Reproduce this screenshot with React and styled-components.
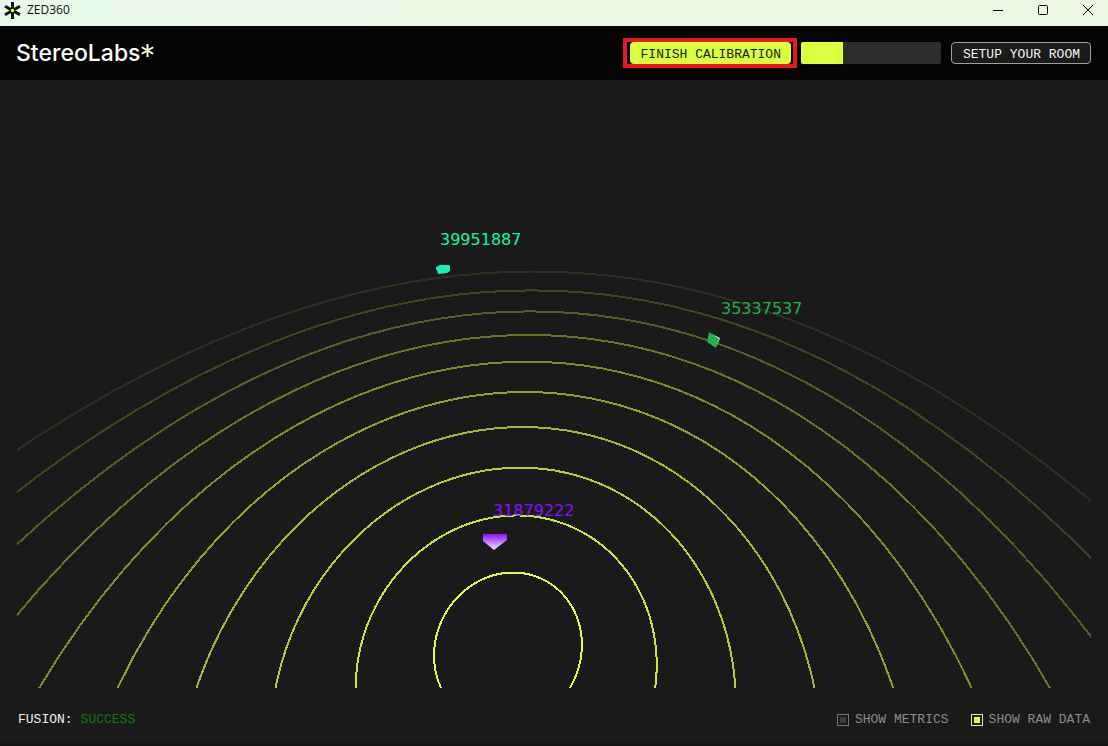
import React from "react";
import styled, { createGlobalStyle } from "styled-components";

const GlobalStyle = createGlobalStyle`
  * { box-sizing: border-box; }
  body { margin: 0; background: #1a1a1a; }
`;

const LIME = "#daff3e";

const Window = styled.div`
  min-height: 100vh;
  display: flex;
  flex-direction: column;
  background: #1a1a1a;
  font-family: "Liberation Mono", monospace;
  font-size: 13px;
  line-height: 16px;
`;

const TitleBar = styled.div`
  height: 26px;
  flex: none;
  display: flex;
  align-items: center;
  justify-content: space-between;
  padding-left: 4px;
  background: linear-gradient(90deg, #e8f8e8, #ecf8e2);
`;

const WindowTitle = styled.div`
  display: flex;
  align-items: center;
  gap: 6px;
  height: 20px;
  margin-bottom: 6px;
  color: #111;
  font: 12px/20px "Open Sans", "Noto Sans", sans-serif;
`;

const WindowControls = styled.div`
  display: flex;
  gap: 5px;
  height: 20px;
  margin-bottom: 6px;
`;

const WindowButton = styled.button`
  width: 40px;
  padding: 0;
  border: 0;
  background: none;
  display: grid;
  place-items: center;
`;

const Header = styled.header`
  height: 54px;
  flex: none;
  display: flex;
  align-items: center;
  justify-content: space-between;
  padding: 0 17px 0 16px;
  background: #040404;
`;

const Brand = styled.div`
  display: flex;
  align-items: center;
  color: #fff;
  font: 500 23px/28px Inter, "Liberation Sans", sans-serif;
  svg { margin-bottom: 5px; }
`;

const Actions = styled.div`
  display: flex;
  align-items: center;
`;

const Highlight = styled.div`
  padding: 0 2px 0 3px;
  border: 4px solid #e81a1c;
  margin-right: 4px;
`;

const Button = styled.button`
  display: block;
  height: 22px;
  padding: 3px 10px 0 11px;
  border: ${(p) => (p.$primary ? "0" : "1px solid #a0a0a0")};
  border-radius: 4px;
  background: ${(p) => (p.$primary ? LIME : "#1a1a1a")};
  color: ${(p) => (p.$primary ? "#1a1a1a" : "#f4f4f4")};
  font: inherit;
  line-height: 18px;
`;

const Progress = styled.div`
  width: 140px;
  height: 22px;
  margin-right: 10px;
  border-radius: 2px;
  background: #2d2d2d;
  overflow: hidden;
`;

const ProgressFill = styled.div`
  height: 100%;
  background: ${LIME};
`;

const Viewport = styled.main`
  flex: 1;
  display: flex;
  padding: 0 17px;
  min-height: 400px;
`;

const Scene = styled.svg`
  flex: 1;
  width: 100%;
  min-width: 0;
  height: auto;
  font: 16px "DejaVu Sans", Verdana, sans-serif;
`;

const StatusBar = styled.footer`
  flex: none;
  height: 58px;
  display: flex;
  align-items: center;
  justify-content: space-between;
  padding: 8px 18px 0;
  border-bottom: 3px solid #171313;
`;

const Status = styled.div`
  display: flex;
  gap: 8px;
  color: #f0f0f0;
`;

const StatusValue = styled.span`
  color: #087a08;
`;

const Options = styled.div`
  display: flex;
  gap: 22px;
`;

const Option = styled.label`
  display: flex;
  align-items: center;
  gap: 6px;
  color: #8b8b8b;
`;

const Check = styled.input`
  appearance: none;
  width: 12px;
  height: 12px;
  margin: 0;
  padding: 2px;
  border: 1px solid #767676;
  background: #3e3e3e content-box;
  &:checked {
    border-color: ${LIME};
    background-color: ${LIME};
  }
`;

// Floor grid: concentric rings, one per metre, seen by the fusion camera.
const project = (x, z) => {
  const depth = z + 9.328;
  return [555.9 + (684 * x - 442) / depth, 6676 / depth - 73.9];
};

const ring = (radius) => {
  const points = [];
  for (let i = 0; i <= 90; i++) {
    const a = (i / 90) * Math.PI * 2;
    const z = radius * Math.cos(a);
    if (z > -2) {
      points.push([a > Math.PI ? a - Math.PI * 2 : a, z]);
    }
  }
  return points
    .sort((p, q) => p[0] - q[0])
    .map(([a, z]) => project(radius * Math.sin(a), z).map((n) => n.toFixed(1)).join(","))
    .join(" ");
};

const RINGS = Array.from({ length: 10 }, (_, i) => ({ radius: i + 1, opacity: 1 - i * 0.1 }));

function Star({ size, color, width }) {
  return (
    <svg width={size} height={size} viewBox="0 0 16 16" aria-hidden="true">
      <g stroke={color} strokeWidth={width}>
        <path d="M8 0V16M1 4L15 12M15 4L1 12" />
      </g>
      <circle cx="8" cy="8" r="1.7" fill={LIME} />
    </svg>
  );
}

export default function App() {
  return (
    <Window>
      <GlobalStyle />
      <TitleBar>
        <WindowTitle>
          <Star size={17} color="#101408" width={2.8} />
          ZED360
        </WindowTitle>
        <WindowControls>
          <WindowButton aria-label="Minimize">
            <svg width="10" height="10"><path d="M0 5.5H10" stroke="#000" /></svg>
          </WindowButton>
          <WindowButton aria-label="Maximize">
            <svg width="10" height="10"><rect x=".5" y=".5" width="9" height="9" rx="1" fill="none" stroke="#000" /></svg>
          </WindowButton>
          <WindowButton aria-label="Close">
            <svg width="10" height="10"><path d="M0 0L10 10M10 0L0 10" stroke="#000" /></svg>
          </WindowButton>
        </WindowControls>
      </TitleBar>
      <Header>
        <Brand>
          StereoLabs
          <Star size={13} color="#fff" width={2.4} />
        </Brand>
        <Actions>
          <Highlight>
            <Button $primary>FINISH CALIBRATION</Button>
          </Highlight>
          <Progress role="progressbar" aria-label="Calibration progress" aria-valuenow={30}>
            <ProgressFill style={{ width: "30%" }} />
          </Progress>
          <Button>SETUP YOUR ROOM</Button>
        </Actions>
      </Header>
      <Viewport>
        <Scene viewBox="17 80 1074 608" preserveAspectRatio="xMidYMax slice">
          <defs>
            <linearGradient id="cone" x1="0" y1="0" x2="0" y2="1">
              <stop offset="0" stopColor="#8a10ff" />
              <stop offset="1" stopColor="#f4e8ff" />
            </linearGradient>
          </defs>
          <g fill="none" stroke={LIME} strokeWidth="2" shapeRendering="crispEdges">
            {RINGS.map((r) => (
              <polyline key={r.radius} points={ring(r.radius)} strokeOpacity={r.opacity} />
            ))}
          </g>
          <path d="M436 267L440 265L449 265L450 266V271L447 273L438 274L437 270L436 270Z" fill="#12f5b2" />
          <path d="M712 334L720 338L719 341L717 345Z" fill="#c8ecd0" />
          <path d="M709 332L719 339L716 348L707 342Z" fill="#22b14c" />
          <path d="M483 534H507V540L494 550L483 541Z" fill="url(#cone)" />
          <text x="440" y="245" fill="#12f5b2">39951887</text>
          <text x="721" y="314" fill="#22b14c">35337537</text>
          <text x="493" y="516" fill="#8a10ff">31879222</text>
        </Scene>
      </Viewport>
      <StatusBar>
        <Status>
          FUSION:<StatusValue>SUCCESS</StatusValue>
        </Status>
        <Options>
          <Option>
            <Check type="checkbox" />
            SHOW METRICS
          </Option>
          <Option>
            <Check type="checkbox" defaultChecked />
            SHOW RAW DATA
          </Option>
        </Options>
      </StatusBar>
    </Window>
  );
}
